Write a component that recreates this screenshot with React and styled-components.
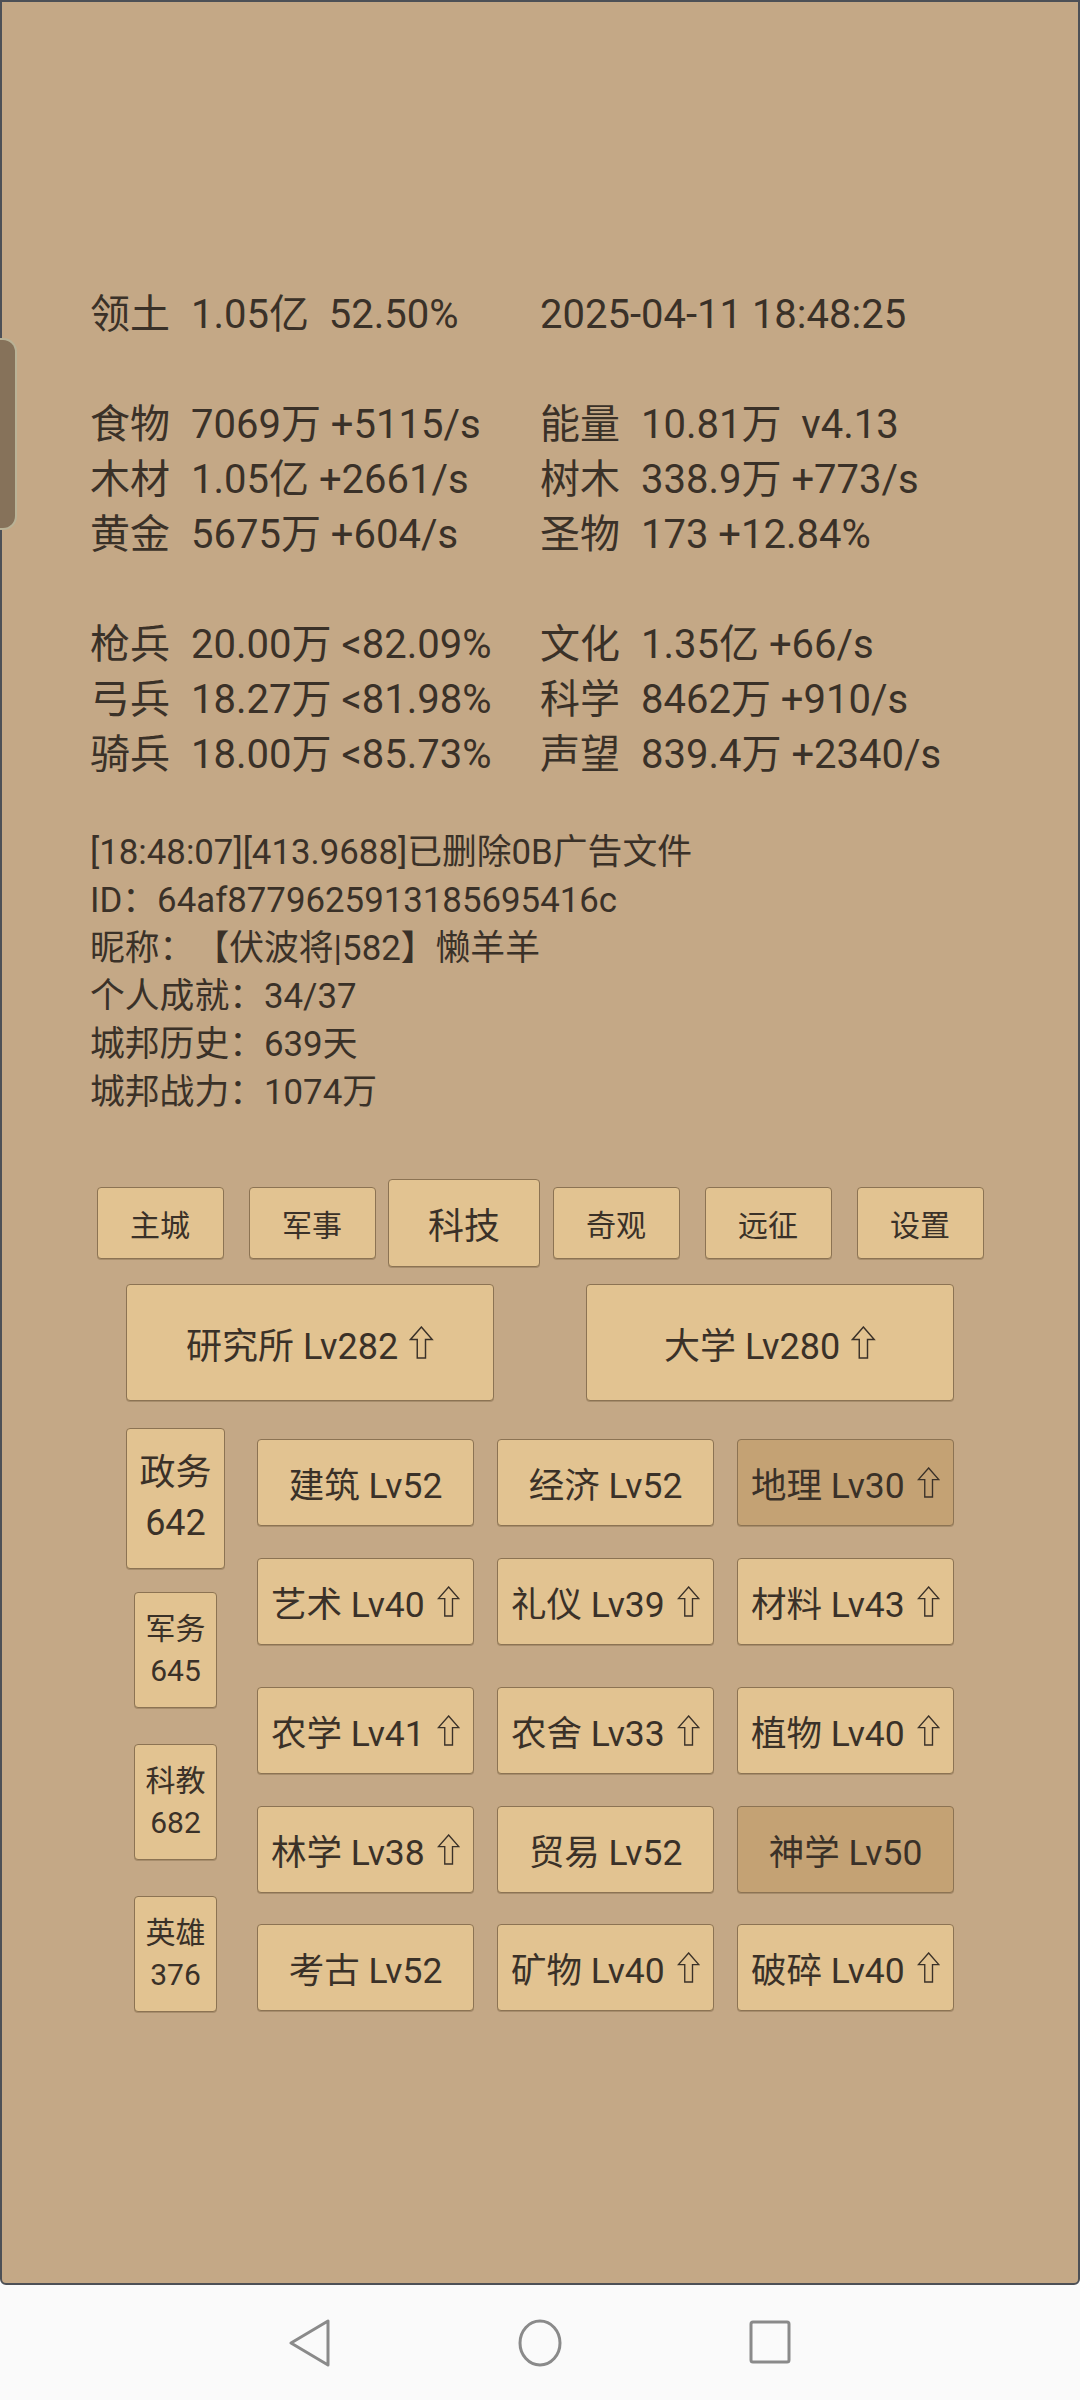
import React from 'react';
import styled, { createGlobalStyle, css } from 'styled-components';

const GlobalStyle = createGlobalStyle`
  html, body {
    margin: 0;
    padding: 0;
    background: #fafafa;
  }
  body {
    font-family: Roboto, "Noto Sans CJK SC", sans-serif;
    color: #3a3128;
    text-spacing-trim: space-all;
  }
`;

const Screen = styled.div`
  width: 1080px;
  height: 2400px;
  display: flex;
  flex-direction: column;
`;

const Panel = styled.main`
  position: relative;
  height: 2285px;
  box-sizing: border-box;
  background: #c4a886;
  border: 2px solid #4d5056;
  border-radius: 0 0 6px 6px;
  padding-top: 285px;
`;

const Handle = styled.div`
  position: absolute;
  left: -2px;
  top: 336px;
  width: 15px;
  height: 188px;
  background: #86725a;
  border: 2px solid #b9b296;
  border-left: none;
  border-radius: 0 14px 14px 0;
`;

const Stats = styled.section`
  padding-left: 88px;
  font-size: 40px;
  line-height: 55px;
`;

const StatLine = styled.div`
  display: grid;
  grid-template-columns: 450px 1fr;
  height: 55px;
`;

const Blank = styled.div`
  height: 55px;
`;

const Cell = styled.div`
  white-space: pre;
`;

const Label = styled.span`
  display: inline-block;
  width: 80px;
  margin-right: 21px;
`;

const Log = styled.section`
  margin-top: 46px;
  padding-left: 88px;
  font-size: 34.8px;
  line-height: 48px;
`;

const LogLine = styled.div`
  white-space: pre;
  height: 48px;
`;

const buttonBase = css`
  box-sizing: border-box;
  display: flex;
  align-items: center;
  justify-content: center;
  background: ${(p) => (p.$dim ? '#c4a274' : '#e2c391')};
  border: 1.5px solid #8c7353;
  border-radius: 4px;
  box-shadow: 0 1px 0 rgba(80, 60, 30, 0.25);
  color: #3a3128;
`;

const Tabs = styled.nav`
  margin-top: 63px;
  display: flex;
  justify-content: center;
`;

const TabSlot = styled.div`
  width: 152px;
  height: 88px;
  display: flex;
  align-items: center;
  justify-content: center;
`;

const Tab = styled.div`
  ${buttonBase};
  width: ${(p) => (p.$active ? '152px' : '127px')};
  height: ${(p) => (p.$active ? '88px' : '72px')};
  font-size: ${(p) => (p.$active ? '36px' : '30px')};
`;

const BigRow = styled.div`
  margin-top: 17px;
  display: flex;
  justify-content: center;
  gap: 92px;
`;

const BigButton = styled.div`
  ${buttonBase};
  width: 368px;
  height: 117px;
  font-size: 36px;
  gap: 11px;
`;

const Board = styled.section`
  margin-top: 21px;
  display: flex;
  justify-content: center;
  gap: 32px;
`;

const SideColumn = styled.div`
  width: 99px;
  display: flex;
  flex-direction: column;
`;

const SideSlot = styled.div`
  height: 152px;
  display: flex;
  align-items: center;
  justify-content: center;
`;

const SideButton = styled.div`
  ${buttonBase};
  flex-direction: column;
  width: ${(p) => (p.$big ? '99px' : '83px')};
  height: ${(p) => (p.$big ? '141px' : '116px')};
  font-size: ${(p) => (p.$big ? '36px' : '30px')};
  line-height: ${(p) => (p.$big ? '50px' : '42px')};
`;

const TechGrid = styled.div`
  padding-top: 17px;
  display: flex;
  flex-direction: column;
`;

const TechRow = styled.div`
  display: flex;
  gap: 23px;
  margin-top: ${(p) => p.$top}px;
`;

const TechButton = styled.div`
  ${buttonBase};
  width: 217px;
  height: 87px;
  font-size: 35.5px;
  gap: 12px;
`;

const NavBar = styled.footer`
  flex: 1;
  background: #fafafa;
  display: flex;
  align-items: center;
  justify-content: center;
  gap: 186px;
`;

const NavIcon = styled.svg`
  width: 44px;
  height: 48px;
  fill: none;
  stroke: #8a8a8a;
  stroke-width: 3;
  stroke-linejoin: round;
`;

const Arrow = ({ size = 32 }) => (
  <svg width={size * 0.75} height={size} viewBox="0 0 24 32" fill="none"
    stroke="#3a3128" strokeWidth="1.4" strokeLinejoin="miter">
    <path d="M12 1 L22.5 13 L16 13 L16 31 L8 31 L8 13 L1.5 13 Z" />
  </svg>
);

const stats = [
  [['领土', '1.05亿  52.50%'], [null, '2025-04-11 18:48:25']],
  null,
  [['食物', '7069万 +5115/s'], ['能量', '10.81万  v4.13']],
  [['木材', '1.05亿 +2661/s'], ['树木', '338.9万 +773/s']],
  [['黄金', '5675万 +604/s'], ['圣物', '173 +12.84%']],
  null,
  [['枪兵', '20.00万 <82.09%'], ['文化', '1.35亿 +66/s']],
  [['弓兵', '18.27万 <81.98%'], ['科学', '8462万 +910/s']],
  [['骑兵', '18.00万 <85.73%'], ['声望', '839.4万 +2340/s']],
];

const logLines = [
  '[18:48:07][413.9688]已删除0B广告文件',
  'ID：64af8779625913185695416c',
  '昵称：【伏波将|582】懒羊羊',
  '个人成就：34/37',
  '城邦历史：639天',
  '城邦战力：1074万',
];

const tabs = ['主城', '军事', '科技', '奇观', '远征', '设置'];

const side = [
  { name: '政务', value: 642, big: true },
  { name: '军务', value: 645 },
  { name: '科教', value: 682 },
  { name: '英雄', value: 376 },
];

const techRows = [
  { top: 0, items: [['建筑', 52], ['经济', 52], ['地理', 30, true, true]] },
  { top: 32, items: [['艺术', 40, true], ['礼仪', 39, true], ['材料', 43, true]] },
  { top: 42, items: [['农学', 41, true], ['农舍', 33, true], ['植物', 40, true]] },
  { top: 32, items: [['林学', 38, true], ['贸易', 52], ['神学', 50, false, true]] },
  { top: 31, items: [['考古', 52], ['矿物', 40, true], ['破碎', 40, true]] },
];

const StatCell = ({ item }) => (
  <Cell>
    {item[0] ? <Label>{item[0]}</Label> : null}
    {item[1]}
  </Cell>
);

export default function App() {
  return (
    <Screen>
      <GlobalStyle />
      <Panel>
        <Handle />
        <Stats>
          {stats.map((row, i) =>
            row ? (
              <StatLine key={i}>
                <StatCell item={row[0]} />
                <StatCell item={row[1]} />
              </StatLine>
            ) : (
              <Blank key={i} />
            )
          )}
        </Stats>
        <Log>
          {logLines.map((l) => (
            <LogLine key={l}>{l}</LogLine>
          ))}
        </Log>
        <Tabs>
          {tabs.map((t) => (
            <TabSlot key={t}>
              <Tab $active={t === '科技'}>{t}</Tab>
            </TabSlot>
          ))}
        </Tabs>
        <BigRow>
          <BigButton>
            研究所 Lv282 <Arrow size={33} />
          </BigButton>
          <BigButton>
            大学 Lv280 <Arrow size={33} />
          </BigButton>
        </BigRow>
        <Board>
          <SideColumn>
            {side.map((s) => (
              <SideSlot key={s.name}>
                <SideButton $big={s.big}>
                  <span>{s.name}</span>
                  <span>{s.value}</span>
                </SideButton>
              </SideSlot>
            ))}
          </SideColumn>
          <TechGrid>
            {techRows.map((row, i) => (
              <TechRow key={i} $top={row.top}>
                {row.items.map(([name, lv, up, dim]) => (
                  <TechButton key={name} $dim={dim}>
                    {name} Lv{lv}
                    {up ? <Arrow size={31} /> : null}
                  </TechButton>
                ))}
              </TechRow>
            ))}
          </TechGrid>
        </Board>
      </Panel>
      <NavBar>
        <NavIcon viewBox="0 0 44 48">
          <path d="M40 2 L40 46 L3 24 Z" />
        </NavIcon>
        <NavIcon viewBox="0 0 44 48">
          <ellipse cx="22" cy="24" rx="20" ry="22" />
        </NavIcon>
        <NavIcon viewBox="0 0 44 48">
          <rect x="3" y="3" width="38" height="40" rx="2" />
        </NavIcon>
      </NavBar>
    </Screen>
  );
}
